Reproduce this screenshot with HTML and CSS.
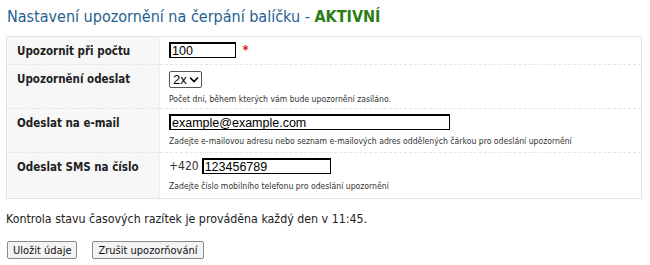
FILE: index.html
```html
<!DOCTYPE html>
<html lang="cs">
<head>
<meta charset="utf-8">
<title>Nastavení upozornění</title>
<link rel="stylesheet" href="styles.css">
</head>
<body>
<h1 class="title">Nastavení upozornění na čerpání balíčku - <span class="status">AKTIVNÍ</span></h1>
<table class="form">
  <tr class="row r1">
    <th class="label">Upozornit při počtu</th>
    <td class="field"><input class="txt num" type="text" value="100"> <span class="req">*</span></td>
  </tr>
  <tr class="row r2">
    <th class="label">Upozornění odeslat</th>
    <td class="field">
      <span class="select">2x <svg class="chev" width="10" height="7" viewBox="0 0 10 7"><path d="M1 1.5 L5 5.5 L9 1.5" fill="none" stroke="#000" stroke-width="1.6"/></svg></span>
      <div class="hint">Počet dní, během kterých vám bude upozornění zasíláno.</div>
    </td>
  </tr>
  <tr class="row r3">
    <th class="label">Odeslat na e-mail</th>
    <td class="field">
      <input class="txt mail" type="text" value="example@example.com">
      <div class="hint">Zadejte e-mailovou adresu nebo seznam e-mailových adres oddělených čárkou pro odeslání upozornění</div>
    </td>
  </tr>
  <tr class="row r4">
    <th class="label">Odeslat SMS na číslo</th>
    <td class="field">
      <span class="prefix">+420</span><input class="txt phone" type="text" value="123456789">
      <div class="hint">Zadejte číslo mobilního telefonu pro odeslání upozornění</div>
    </td>
  </tr>
</table>
<p class="note">Kontrola stavu časových razítek je prováděna každý den v 11:45.</p>
<div class="buttons">
  <button class="btn" type="button">Uložit údaje</button>
  <button class="btn" type="button">Zrušit upozorňování</button>
</div>
</body>
</html>
```

FILE: styles.css
```css
html, body {
  margin: 0;
  padding: 0;
  background: #fff;
}
body {
  padding: 0 6px;
  font-family: "DejaVu Sans Condensed", "DejaVu Sans", sans-serif;
  color: #222;
}
.title {
  margin: 0;
  padding-top: 7px;
  height: 29px;
  box-sizing: border-box;
  font-size: 16px;
  font-weight: normal;
  color: #1f5f92;
  line-height: 20px;
  padding-left: 1px;
}
.status {
  color: #2b7d16;
  font-weight: bold;
}
.form {
  width: 636px;
  border-collapse: collapse;
  border: 1px solid #e3e3e3;
  margin-top: 7px;
}
.row th, .row td {
  border-bottom: 1px dashed #e4e4e4;
  vertical-align: top;
}
.r4 th, .r4 td { border-bottom: none; }
.label {
  width: 153px;
  background: #f7f7f7;
  border-right: 1px solid #ececec;
  text-align: left;
  font-size: 11.5px;
  font-weight: bold;
  color: #222;
  padding: 7px 0 0 10px;
  box-sizing: border-box;
}
.field {
  padding: 5px 0 0 9px;
  font-size: 12px;
}
.r1 .field { height: 22px; }
.r2 .field, .r3 .field { height: 38px; }
.r4 .field { height: 40px; }
.txt {
  font-family: "Liberation Sans", Arial, sans-serif;
  font-size: 12.5px;
  border: 1px solid #000;
  border-top-width: 2px;
  border-left-width: 2px;
  padding: 0 1px;
  height: 16px;
  box-sizing: border-box;
  margin: 0;
  vertical-align: top;
  color: #000;
}
.num { width: 67px; }
.mail { width: 281px; }
.phone { width: 129px; }
.req {
  color: #d0161e;
  font-weight: bold;
  font-size: 13px;
  margin-left: 3px;
  vertical-align: top;
  line-height: 16px;
}
.select {
  display: inline-flex;
  align-items: center;
  gap: 2px;
  height: 17px;
  box-sizing: border-box;
  border: 1px solid #555;
  border-radius: 2px;
  padding: 0 2px 0 3px;
  font-family: "Liberation Sans", Arial, sans-serif;
  font-size: 13px;
  color: #000;
  margin-top: 1px;
}
.hint {
  font-size: 8.6px;
  color: #333;
  margin-top: 5px;
  line-height: 12px;
}
.prefix {
  font-size: 12px;
  color: #333;
  vertical-align: top;
  line-height: 17px;
  margin-right: 3px;
}
.note {
  margin: 12px 0 0 0;
  font-size: 12.3px;
  color: #222;
  line-height: 16px;
}
.buttons {
  display: flex;
  gap: 15px;
  margin-top: 14px;
  padding-left: 1px;
}
.btn {
  font-family: "DejaVu Sans Condensed", "DejaVu Sans", sans-serif;
  font-size: 11px;
  color: #111;
  background: #f3f3f3;
  border: 1px solid #8a8a8a;
  border-radius: 2px;
  height: 18px;
  padding: 0 5px;
  line-height: 15px;
}
```
